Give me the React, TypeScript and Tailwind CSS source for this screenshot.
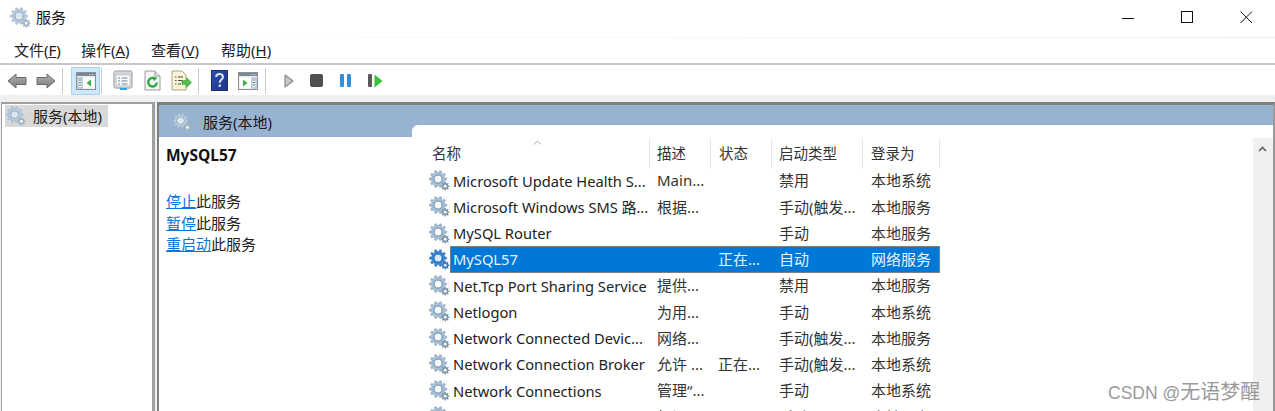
import React from "react";

function gearPath(cx: number, cy: number, rO: number, rI: number, n: number) {
  const pts: string[] = [];
  for (let i = 0; i < n; i++) {
    const a = (i / n) * Math.PI * 2;
    const s = (Math.PI * 2) / n;
    const p = (r: number, t: number) => `${(cx + r * Math.cos(t)).toFixed(2)} ${(cy + r * Math.sin(t)).toFixed(2)}`;
    pts.push(p(rI, a - s * 0.32), p(rO, a - s * 0.17), p(rO, a + s * 0.17), p(rI, a + s * 0.32));
  }
  return "M" + pts.join("L") + "Z";
}

function Gear({ size = 22, tone = "normal" }: { size?: number; tone?: "normal" | "selected" | "pale" }) {
  const big = tone === "selected" ? "#3b87d6" : tone === "pale" ? "#b4cbe0" : "#a7c3dc";
  const edge = tone === "selected" ? "#1b5fa8" : tone === "pale" ? "#93a9bc" : "#6b8299";
  const hole = tone === "selected" ? "#d7e8f8" : tone === "pale" ? "#dde7f0" : "#f7f9fb";
  const small = tone === "selected" ? "#3a78b8" : tone === "pale" ? "#a3b2c0" : "#7e95aa";
  return (
    <svg width={size} height={size} viewBox="0 0 22 22" className="shrink-0">
      <path d={gearPath(9.5, 9.5, 9, 6.9, 10)} fill={big} stroke={edge} strokeWidth="0.5" />
      <circle cx="9.5" cy="9.5" r="4.2" fill={hole} stroke={edge} strokeWidth="1" />
      <path d={gearPath(17, 17, 4.6, 3.3, 8)} fill={small} />
      <circle cx="17" cy="17" r="1.5" fill={tone === "selected" ? "#d7e8f8" : "#ffffff"} />
    </svg>
  );
}

function Arrow({ flip }: { flip?: boolean }) {
  return (
    <svg width="20" height="16" viewBox="0 0 20 16" style={flip ? { transform: "scaleX(-1)" } : undefined}>
      <defs>
        <linearGradient id="arrowFill" x1="0" y1="0" x2="0" y2="1">
          <stop offset="0" stopColor="#b4b4b4" />
          <stop offset="1" stopColor="#7a7a7a" />
        </linearGradient>
      </defs>
      <path d="M1 8 L9 1 V4.500 H19 V11.500 H9 V15 Z" fill="url(#arrowFill)" stroke="#6a6a6a" strokeWidth="1" strokeLinejoin="round" />
    </svg>
  );
}

function PanelIcon({ mode }: { mode: "left" | "right" }) {
  return (
    <svg width="20" height="18" viewBox="0 0 20 18">
      <rect x="0.500" y="0.500" width="19" height="17" fill="#eef1f4" stroke="#8b8f93" />
      <rect x="1" y="1" width="18" height="3" fill="#7b8793" />
      <circle cx="14" cy="2.500" r="0.600" fill="#fff" />
      <circle cx="16.500" cy="2.500" r="0.600" fill="#fff" />
      {mode === "left" ? (
        <>
          <rect x="2" y="6" width="4" height="10" fill="#fff" stroke="#7a98b5" strokeWidth="0.800" />
          <path d="M3 8h2M3 10.500h2M3 13h2" stroke="#4d6f8f" />
          <rect x="7" y="6" width="11" height="10" fill="#fff" />
          <path d="M15 7.500 L10.500 11 L15 14.500 Z" fill="#36b24a" />
        </>
      ) : (
        <>
          <rect x="2" y="6" width="11" height="10" fill="#fff" />
          <path d="M5 7.500 L9.500 11 L5 14.500 Z" fill="#36b24a" />
          <rect x="14" y="6" width="4" height="10" fill="#fff" stroke="#7a98b5" strokeWidth="0.800" />
          <path d="M15 8h2M15 10.500h2M15 13h2" stroke="#4d6f8f" />
        </>
      )}
    </svg>
  );
}

function SheetIcon() {
  return (
    <svg width="20" height="21" viewBox="0 0 20 21">
      <rect x="1" y="1" width="18" height="17" rx="1.500" fill="#eceff2" stroke="#8a8e92" />
      <rect x="3" y="3" width="14" height="13" fill="#fff" stroke="#b4b8bc" />
      <rect x="4" y="3.500" width="12" height="2" fill="#c5ccd3" />
      <path d="M5 8h2M8.500 8h6M5 11h2M8.500 11h6M5 14h2M8.500 14h6" stroke="#5f7c99" />
      <rect x="7" y="18" width="7" height="2" fill="#32a4e8" />
    </svg>
  );
}

function RefreshIcon() {
  return (
    <svg width="17" height="21" viewBox="0 0 17 21">
      <path d="M1 1H11L16 6V20H1Z" fill="#f6f6f6" stroke="#9a9a9a" />
      <path d="M11 1V6H16" fill="#e3e3e3" stroke="#9a9a9a" />
      <path d="M12.800 12.500A4.300 4.300 0 1 1 11 8.700" fill="none" stroke="#2da83f" strokeWidth="2.400" />
      <path d="M9 6.500 L13.500 8 L10 11 Z" fill="#2da83f" />
    </svg>
  );
}

function ExportIcon() {
  return (
    <svg width="21" height="21" viewBox="0 0 21 21">
      <path d="M1 1H11L15 5V20H1Z" fill="#fbf3d3" stroke="#a8a48e" />
      <path d="M4 7h1.500M7 7h5M4 10.500h1.500M7 10.500h4M4 14h1.500M7 14h3" stroke="#4b4b4b" />
      <path d="M11 10.500H15.500V7.500L20.500 12.500L15.500 17.500V14.500H11Z" fill="#55bd4a" stroke="#3d9d37" strokeWidth="0.600" />
    </svg>
  );
}

function HelpIcon() {
  return (
    <svg width="17" height="21" viewBox="0 0 17 21">
      <defs>
        <linearGradient id="helpFill" x1="0" y1="0" x2="1" y2="1">
          <stop offset="0" stopColor="#2c52b6" />
          <stop offset="1" stopColor="#20317f" />
        </linearGradient>
      </defs>
      <rect x="0.500" y="0.500" width="16" height="20" fill="url(#helpFill)" stroke="#1c2e78" />
      <path d="M5.200 7 C5.200 3 12 3 12 7 C12 9.600 8.700 9.600 8.700 12.700" fill="none" stroke="#dfe7f7" strokeWidth="2" />
      <rect x="7.600" y="14.500" width="2.300" height="2.300" fill="#dfe7f7" />
    </svg>
  );
}

function Sep({ className }: { className: string }) {
  return <div className={`h-[26px] w-[1px] shrink-0 bg-[#c9c9c9] ${className}`} />;
}

const rows = [
  { n: "Microsoft Update Health S...", d: "Main...", s: "", t: "禁用", l: "本地系统" },
  { n: "Microsoft Windows SMS 路...", d: "根据...", s: "", t: "手动(触发...", l: "本地服务" },
  { n: "MySQL Router", d: "", s: "", t: "手动", l: "本地服务" },
  { n: "MySQL57", d: "", s: "正在...", t: "自动", l: "网络服务", sel: true },
  { n: "Net.Tcp Port Sharing Service", d: "提供...", s: "", t: "禁用", l: "本地服务" },
  { n: "Netlogon", d: "为用...", s: "", t: "手动", l: "本地系统" },
  { n: "Network Connected Devic...", d: "网络...", s: "", t: "手动(触发...", l: "本地服务" },
  { n: "Network Connection Broker", d: "允许 ...", s: "正在...", t: "手动(触发...", l: "本地系统" },
  { n: "Network Connections", d: "管理“...", s: "", t: "手动", l: "本地系统" },
  { n: "Network List Service", d: "标识...", s: "", t: "手动", l: "本地服务" },
];

const cols = "grid grid-cols-[22px_199px_61px_61px_92px_77px]";
const selCell = "border-t border-b border-[#7f7f7f] bg-[#0078d7] text-[#e8f2fb]";

export default function App() {
  return (
    <div className="relative flex h-[411px] w-[1275px] flex-col overflow-hidden bg-white font-['Noto_Sans','Noto_Sans_CJK_SC',sans-serif] text-[15px] text-[#1a1a1a]">
      {/* title bar */}
      <div className="flex h-[37px] shrink-0 items-center pb-[2px]">
        <div className="ml-[10px] -mt-[1px]"><Gear size={21} tone="pale" /></div>
        <span className="ml-[5px] font-['Noto_Sans_CJK_SC',sans-serif] text-[15px] text-[#111]">服务</span>
        <div className="ml-auto flex items-center">
          <svg width="13" height="13" viewBox="0 0 13 13" className="mr-[46px]"><path d="M0 7.500H12" stroke="#111" /></svg>
          <svg width="13" height="13" viewBox="0 0 13 13" className="mr-[46px]"><rect x="0.500" y="0.500" width="11" height="11" fill="none" stroke="#111" /></svg>
          <svg width="13" height="13" viewBox="0 0 13 13" className="mr-[22px]"><path d="M0.500 0.500L12 12M12 0.500L0.500 12" stroke="#111" /></svg>
        </div>
      </div>
      <div className="h-[1px] shrink-0 bg-gradient-to-r from-[#fcfcfc] via-[#f8f8f8] to-[#eeeeee]" />

      {/* menu */}
      <div className="flex h-[27px] shrink-0 items-center border-b-2 border-[#c8c8cc] pl-[14px] text-[15px] text-[#222]">
        <span className="w-[67px]">文件(<u>F</u>)</span>
        <span className="w-[70px]">操作(<u>A</u>)</span>
        <span className="w-[70px]">查看(<u>V</u>)</span>
        <span>帮助(<u>H</u>)</span>
      </div>

      {/* toolbar */}
      <div className="flex h-[30px] shrink-0 items-center pt-[1px]">
        <div className="ml-[7px]"><Arrow /></div>
        <div className="ml-[9px]"><Arrow flip /></div>
        <Sep className="ml-[6px]" />
        <div className="ml-[8px] flex h-[28px] w-[29px] items-center justify-center border border-[#a8d4f7] bg-[#cce8ff]"><PanelIcon mode="left" /></div>
        <Sep className="ml-[1px]" />
        <div className="ml-[11px]"><SheetIcon /></div>
        <div className="ml-[11px]"><RefreshIcon /></div>
        <div className="ml-[10px]"><ExportIcon /></div>
        <Sep className="ml-[6px]" />
        <div className="ml-[12px]"><HelpIcon /></div>
        <div className="ml-[10px]"><PanelIcon mode="right" /></div>
        <Sep className="ml-[7px]" />
        <svg width="10" height="14" viewBox="0 0 10 14" className="ml-[18px]"><path d="M1 1L9 7L1 13Z" fill="#c8c8c8" stroke="#8c8c8c" strokeWidth="1.200" strokeLinejoin="round" /></svg>
        <div className="ml-[16px] h-[13px] w-[13px] rounded-[2px] bg-[#505050]" />
        <div className="ml-[17px] flex gap-[3px]">
          <div className="h-[13px] w-[4px] rounded-[1px] bg-[#2f8fdc]" />
          <div className="h-[13px] w-[4px] rounded-[1px] bg-[#2f8fdc]" />
        </div>
        <div className="ml-[17px] flex items-center gap-[2px]">
          <div className="h-[13px] w-[4px] rounded-[1px] bg-[#5a5a5a]" />
          <svg width="9" height="14" viewBox="0 0 9 14"><path d="M0.500 0.500L8.500 7L0.500 13.500Z" fill="#36c23a" /></svg>
        </div>
      </div>

      {/* strip */}
      <div className="h-[7px] shrink-0 bg-[#f0f0f0]" />

      {/* panels */}
      <div className="flex min-h-0 flex-1 bg-[#f0f0f0] pl-[1px]">
        <div className="w-[154px] shrink-0 border-l border-r-[3px] border-t-2 border-[#a0a0a0] bg-white pl-[3px] pt-[1px]">
          <div className="flex h-[22px] w-[103px] items-center bg-[#d9d9d9] pl-[1px]">
            <Gear size={20} tone="pale" />
            <span className="ml-[7px] text-[15px] text-[#222]">服务(本地)</span>
          </div>
        </div>
        <div className="ml-[2px] flex min-w-0 flex-1 border-l-2 border-r-2 border-t-[3px] border-[#7f7f7f] border-r-[#9a9a9a] bg-[#98b3d1]">
          {/* detail column */}
          <div className="flex w-[253px] shrink-0 flex-col">
            <div className="flex h-[32px] shrink-0 items-center pl-[13px]">
              <div className="-mb-[2px] flex items-center">
                <Gear size={20} tone="pale" />
                <span className="ml-[11px] text-[15px] text-[#1a1a1a]">服务(本地)</span>
              </div>
            </div>
            <div className="flex-1 bg-white pl-[7px] pt-[7px]">
              <div className="h-[22px] text-[15.500px] font-bold leading-[22px] text-[#111]">MySQL57</div>
              <div className="mt-[25px] flex flex-col text-[15px] leading-[21.500px] text-[#222]">
                <div><span className="text-[#0a74da] underline">停止</span>此服务</div>
                <div><span className="text-[#0a74da] underline">暂停</span>此服务</div>
                <div><span className="text-[#0a74da] underline">重启动</span>此服务</div>
              </div>
            </div>
          </div>
          {/* list column */}
          <div className="mt-[20px] flex min-w-0 flex-1 rounded-tl-[6px] bg-white">
            <div className="min-w-0 flex-1 pl-[16px] pt-[14px]">
              <div className="relative flex h-[30px] w-[512px] items-center text-[14.500px] text-[#333]">
                <svg width="9" height="5" viewBox="0 0 9 5" className="absolute left-[105px] top-[1px]"><path d="M1 4.500L4.500 1L8 4.500" fill="none" stroke="#a8a8a8" /></svg>
                <div className="flex h-full w-[222px] items-center border-r border-[#e5e5e5] pl-[4px]">名称</div>
                <div className="flex h-full w-[61px] items-center border-r border-[#e5e5e5] pl-[7px]">描述</div>
                <div className="flex h-full w-[61px] items-center border-r border-[#e5e5e5] pl-[8px]">状态</div>
                <div className="flex h-full w-[91px] items-center border-r border-[#e5e5e5] pl-[7px]">启动类型</div>
                <div className="flex h-full w-[77px] items-center border-r border-[#e5e5e5] pl-[8px]">登录为</div>
              </div>
              <div className="-mt-[1.500px]">
                {rows.map((r) => (
                  <div key={r.n} className={`${cols} h-[26.250px] w-[512px] items-center text-[15px]`}>
                    <div className="flex justify-start pl-[1px]"><Gear size={21} tone={r.sel ? "selected" : "normal"} /></div>
                    <div className={`flex h-full items-center whitespace-nowrap text-[14.700px] ${r.sel ? `${selCell} border-l pl-[2px]` : "pl-[3px] text-[#222]"}`}>{r.n}</div>
                    <div className={`flex h-full items-center whitespace-nowrap pl-[8px] ${r.sel ? selCell : "text-[#333]"}`}>{r.d}</div>
                    <div className={`flex h-full items-center whitespace-nowrap pl-[8px] ${r.sel ? selCell : "text-[#333]"}`}>{r.s}</div>
                    <div className={`flex h-full items-center whitespace-nowrap pl-[8px] ${r.sel ? selCell : "text-[#333]"}`}>{r.t}</div>
                    <div className={`flex h-full items-center whitespace-nowrap pl-[8px] ${r.sel ? `${selCell} border-r text-[#cfe4f7]` : "text-[#333]"}`}>{r.l}</div>
                  </div>
                ))}
              </div>
            </div>
            <div className="mt-[13px] w-[20px] shrink-0 bg-[#f0f0f0] pl-[5px] pt-[8px]">
              <svg width="9" height="6" viewBox="0 0 9 6"><path d="M1 5L4.500 1.500L8 5" fill="none" stroke="#606060" strokeWidth="1.600" /></svg>
            </div>
          </div>
        </div>
      </div>

      <div className="absolute left-[1108px] top-[380px] flex items-baseline whitespace-nowrap font-['Liberation_Sans','Noto_Sans_CJK_SC',sans-serif] text-[17.500px] leading-[24px] text-[#9a9a9a]">
        <span>CSDN @</span><span className="text-[20px]">无语梦醒</span>
      </div>
    </div>
  );
}
